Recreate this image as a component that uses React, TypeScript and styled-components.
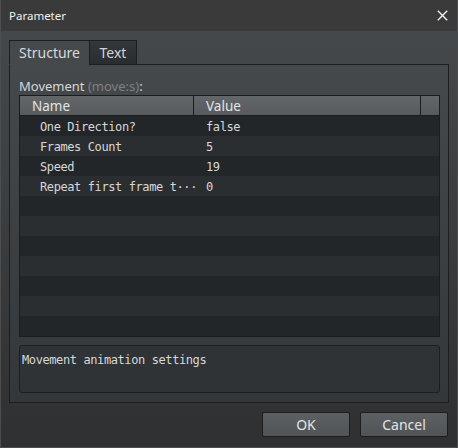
import React from "react";
import styled, { createGlobalStyle } from "styled-components";

const Global = createGlobalStyle`
  html, body { margin: 0; padding: 0; background: #2f3133; }
  * { box-sizing: border-box; }
`;

const UI = `"Noto Sans", "Open Sans", "DejaVu Sans", sans-serif`;
const MONO = `"DejaVu Sans Mono", "Liberation Mono", monospace`;

const Window = styled.div`
  width: 458px;
  height: 448px;
  border: 1px solid #4b4d4f;
  border-top: none;
  display: flex;
  flex-direction: column;
  background: linear-gradient(#474a4c, #2e3032);
  font-family: ${UI};
  overflow: hidden;
`;

const TitleBar = styled.div`
  height: 31px;
  flex: none;
  background: #3a3a3a;
  display: flex;
  align-items: center;
  justify-content: space-between;
  padding: 0 9px 1px 8px;
  color: #f0f0f0;
  font-size: 11.5px;
`;

const Close = styled.svg`
  width: 11px;
  height: 11px;
  margin-top: 1px;
`;

const Body = styled.div`
  flex: 1;
  display: flex;
  flex-direction: column;
  padding: 9px 8px 0 8px;
`;

const TabRow = styled.div`
  display: flex;
  height: 25px;
  margin-bottom: -1px;
  position: relative;
  z-index: 1;
`;

const Tab = styled.div<{ $active?: boolean; $w: number }>`
  width: ${(p) => p.$w}px;
  height: 25px;
  display: flex;
  align-items: center;
  justify-content: center;
  padding-bottom: 1px;
  font-size: 14px;
  border: 1px solid #1c1e20;
  border-bottom: ${(p) => (p.$active ? "1px solid #46494b" : "1px solid #1c1e20")};
  margin-left: ${(p) => (p.$active ? "0" : "-1px")};
  color: ${(p) => (p.$active ? "#d6d9dc" : "#d0d3d6")};
  background: ${(p) => (p.$active ? "#46494b" : "linear-gradient(#33363a, #2a2d30)")};
`;

const Pane = styled.div`
  height: 339px;
  border: 1px solid #1c1e20;
  padding: 12px 8px 9px 9px;
  display: flex;
  flex-direction: column;
  background: linear-gradient(#46494b, #34373a);
`;

const Label = styled.div`
  height: 18px;
  line-height: 18px;
  font-size: 13px;
  color: #d4d7da;
`;

const Muted = styled.span`
  color: #7d8184;
`;

const Table = styled.div`
  height: 242px;
  border: 1px solid #1a1c1e;
  display: flex;
  flex-direction: column;
  background: #232628;
`;

const Header = styled.div`
  height: 20px;
  flex: none;
  display: grid;
  grid-template-columns: 174px 227px 1fr;
  border-bottom: 1px solid #1a1c1e;
  background: linear-gradient(#63676a, #575b5d);
`;

const HeadCell = styled.div<{ $last?: boolean }>`
  padding-left: 12px;
  font-size: 13.5px;
  line-height: 20px;
  color: #e2e4e6;
  border-right: ${(p) => (p.$last ? "none" : "1px solid #1a1c1e")};
`;

const Row = styled.div<{ $odd: boolean }>`
  height: 20px;
  flex: none;
  display: grid;
  grid-template-columns: 174px 1fr;
  padding-top: 3px;
  background: ${(p) => (p.$odd ? "#2b2e30" : "#232628")};
  font-family: ${MONO};
  font-size: 12px;
  letter-spacing: -0.4px;
  line-height: 17px;
  color: #d6d8da;
`;

const NameCell = styled.div`
  padding-left: 20px;
  white-space: nowrap;
`;

const ValueCell = styled.div`
  padding-left: 12px;
  white-space: nowrap;
`;

const Desc = styled.div`
  margin-top: 8px;
  height: 48px;
  border: 1px solid #1c1e20;
  border-radius: 3px;
  background: #303335;
  padding: 5px 2px;
  font-family: ${MONO};
  font-size: 12px;
  letter-spacing: -0.4px;
  line-height: 18px;
  color: #d6d8da;
`;

const Footer = styled.div`
  display: flex;
  justify-content: flex-end;
  gap: 10px;
  padding: 9px 1px 0 0;
`;

const Button = styled.div`
  width: 88px;
  height: 25px;
  border: 1px solid #1b1d1f;
  border-radius: 2px;
  background: linear-gradient(#5c6062, #505456);
  display: flex;
  align-items: center;
  justify-content: center;
  padding-bottom: 1px;
  font-size: 14px;
  color: #e2e4e6;
`;

const rows: [string, string][] = [
  ["One Direction?", "false"],
  ["Frames Count", "5"],
  ["Speed", "19"],
  ["Repeat first frame t\u00B7\u00B7\u00B7", "0"],
  ["", ""],
  ["", ""],
  ["", ""],
  ["", ""],
  ["", ""],
  ["", ""],
  ["", ""],
];

export default function App() {
  return (
    <>
      <Global />
      <Window>
        <TitleBar>
          <span>Parameter</span>
          <Close viewBox="0 0 11 11">
            <path d="M0.8 0.8 L10.2 10.2 M10.2 0.8 L0.8 10.2" stroke="#f0f0f0" strokeWidth="1.4" fill="none" />
          </Close>
        </TitleBar>
        <Body>
          <TabRow>
            <Tab $active $w={81}>Structure</Tab>
            <Tab $w={48}>Text</Tab>
          </TabRow>
          <Pane>
            <Label>
              Movement <Muted>(move:s)</Muted>:
            </Label>
            <Table>
              <Header>
                <HeadCell>Name</HeadCell>
                <HeadCell>Value</HeadCell>
                <HeadCell $last />
              </Header>
              {rows.map(([n, v], i) => (
                <Row key={i} $odd={i % 2 === 1}>
                  <NameCell>{n}</NameCell>
                  <ValueCell>{v}</ValueCell>
                </Row>
              ))}
            </Table>
            <Desc>Movement animation settings</Desc>
          </Pane>
          <Footer>
            <Button>OK</Button>
            <Button>Cancel</Button>
          </Footer>
        </Body>
      </Window>
    </>
  );
}
